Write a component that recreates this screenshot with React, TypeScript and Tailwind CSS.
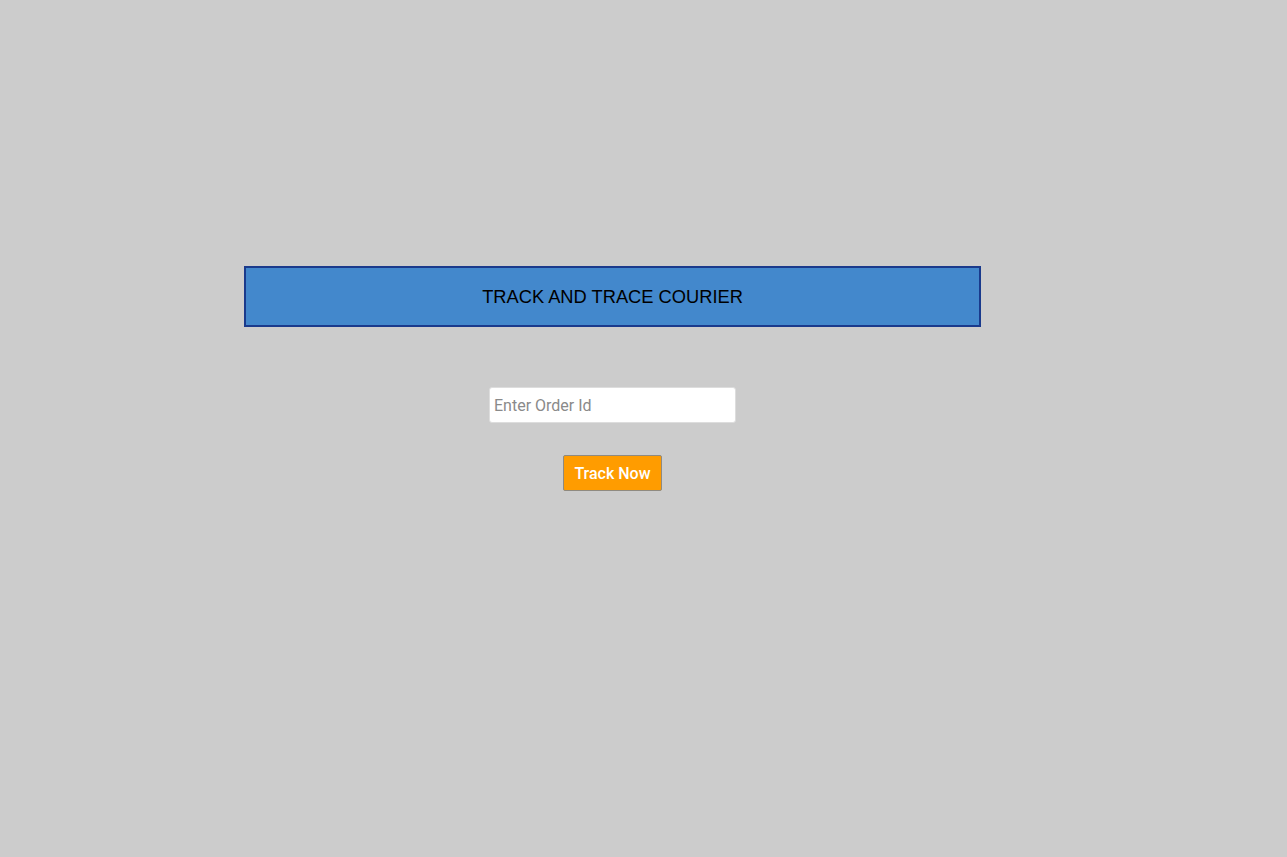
import React from "react";

export default function App() {
  return (
    <div className="min-h-screen w-full bg-[#cccccc]">
      <div className="w-[1225px] flex flex-col items-center pt-[266px]">
        <div className="w-[737px] h-[61px] border-2 border-[#1a3a8c] bg-[#4388cc] flex items-center justify-center">
          <h1 className="text-[18.3px] text-black font-['Liberation_Sans',sans-serif] tracking-normal">
            TRACK AND TRACE COURIER
          </h1>
        </div>
        <input
          type="text"
          placeholder="Enter Order Id"
          className="mt-[60px] w-[247px] h-[36px] bg-white border border-[#dddddd] rounded-[3px] px-[4px] text-[16px] font-['Roboto',sans-serif] placeholder:text-[#8a8a8a] outline-none"
        />
        <button className="mt-[32px] w-[99px] h-[36px] bg-[#ff9c00] border border-[#8f8a80] rounded-[2px] pt-[1px] text-white text-[16px] font-medium font-['Roboto',sans-serif]">
          Track Now
        </button>
      </div>
    </div>
  );
}
